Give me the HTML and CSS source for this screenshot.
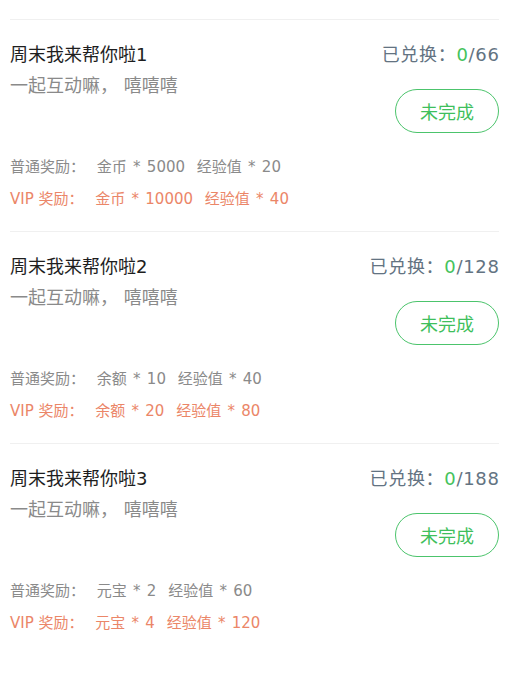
FILE: index.html
```html
<!DOCTYPE html>
<html lang="zh-CN">
<head>
  <meta charset="UTF-8">
  <title>任务列表</title>
  <link rel="stylesheet" href="styles.css">
</head>
<body>

	<ul class="taskList">
		<li class="task">
			<div class="taskHead">
				<div class="taskInfo">
					<p class="taskTitle">周末我来帮你啦1</p>
					<p class="taskDesc">一起互动嘛， 嘻嘻嘻</p>
				</div>
				<div class="taskSide">
					<p class="taskCount">已兑换：<span class="done">0</span>/66</p>
					<button class="taskBtn" type="button">未完成</button>
				</div>
			</div>
			<p class="reward">
				<span class="rewardLabel">普通奖励：</span>
				<span class="rewardItem">金币 * 5000</span>
				<span class="rewardItem">经验值 * 20</span>
			</p>
			<p class="reward vip">
				<span class="rewardLabel">VIP 奖励：</span>
				<span class="rewardItem">金币 * 10000</span>
				<span class="rewardItem">经验值 * 40</span>
			</p>
		</li>

		<li class="task">
			<div class="taskHead">
				<div class="taskInfo">
					<p class="taskTitle">周末我来帮你啦2</p>
					<p class="taskDesc">一起互动嘛， 嘻嘻嘻</p>
				</div>
				<div class="taskSide">
					<p class="taskCount">已兑换：<span class="done">0</span>/128</p>
					<button class="taskBtn" type="button">未完成</button>
				</div>
			</div>
			<p class="reward">
				<span class="rewardLabel">普通奖励：</span>
				<span class="rewardItem">余额 * 10</span>
				<span class="rewardItem">经验值 * 40</span>
			</p>
			<p class="reward vip">
				<span class="rewardLabel">VIP 奖励：</span>
				<span class="rewardItem">余额 * 20</span>
				<span class="rewardItem">经验值 * 80</span>
			</p>
		</li>

		<li class="task">
			<div class="taskHead">
				<div class="taskInfo">
					<p class="taskTitle">周末我来帮你啦3</p>
					<p class="taskDesc">一起互动嘛， 嘻嘻嘻</p>
				</div>
				<div class="taskSide">
					<p class="taskCount">已兑换：<span class="done">0</span>/188</p>
					<button class="taskBtn" type="button">未完成</button>
				</div>
			</div>
			<p class="reward">
				<span class="rewardLabel">普通奖励：</span>
				<span class="rewardItem">元宝 * 2</span>
				<span class="rewardItem">经验值 * 60</span>
			</p>
			<p class="reward vip">
				<span class="rewardLabel">VIP 奖励：</span>
				<span class="rewardItem">元宝 * 4</span>
				<span class="rewardItem">经验值 * 120</span>
			</p>
		</li>
	</ul>

</body>
</html>
```

FILE: styles.css
```css
body{
	margin: 0;
	background: #fff;
	font-family: "DejaVu Sans", "Noto Sans CJK SC", sans-serif;
}

p{
	margin: 0;
}

.taskList{
	margin: 0;
	padding: 19px 11px 0 10px;
	list-style: none;
}

.task{
	border-top: 1px solid #f0f0f0;
	padding: 20px 0 18px;
}

.taskHead{
	display: flex;
	justify-content: space-between;
	align-items: flex-start;
	margin-bottom: 16px;
}

.taskTitle{
	font-size: 18px;
	line-height: 30px;
	color: #1e1e1e;
}
.taskDesc{
	font-size: 18px;
	line-height: 32px;
	color: #8a8a8a;
}

.taskSide{
	display: flex;
	flex-direction: column;
	align-items: flex-end;
}
.taskCount{
	font-size: 18px;
	line-height: 30px;
	color: #637382;
	letter-spacing: 0.7px;
	margin-right: -0.7px;
}
.taskCount .done{
	color: #45c35c;
}

.taskBtn{
	margin-top: 19px;
	width: 104px;
	height: 44px;
	padding: 0;
	background: #fff;
	border: 1px solid #4cc46c;
	border-radius: 22px;
	color: #3fbf5c;
	font-family: inherit;
	font-size: 18px;
}

.reward{
	font-size: 15px;
	line-height: 32px;
	color: #8a8a8a;
	white-space: nowrap;
	padding-top: 2px;
	margin-bottom: -2px;
}
.reward.vip{
	color: #eb8668;
}
.rewardLabel{
	margin-right: 7px;
}
.rewardItem{
	margin-right: 7px;
	word-spacing: 1.5px;
}
```
